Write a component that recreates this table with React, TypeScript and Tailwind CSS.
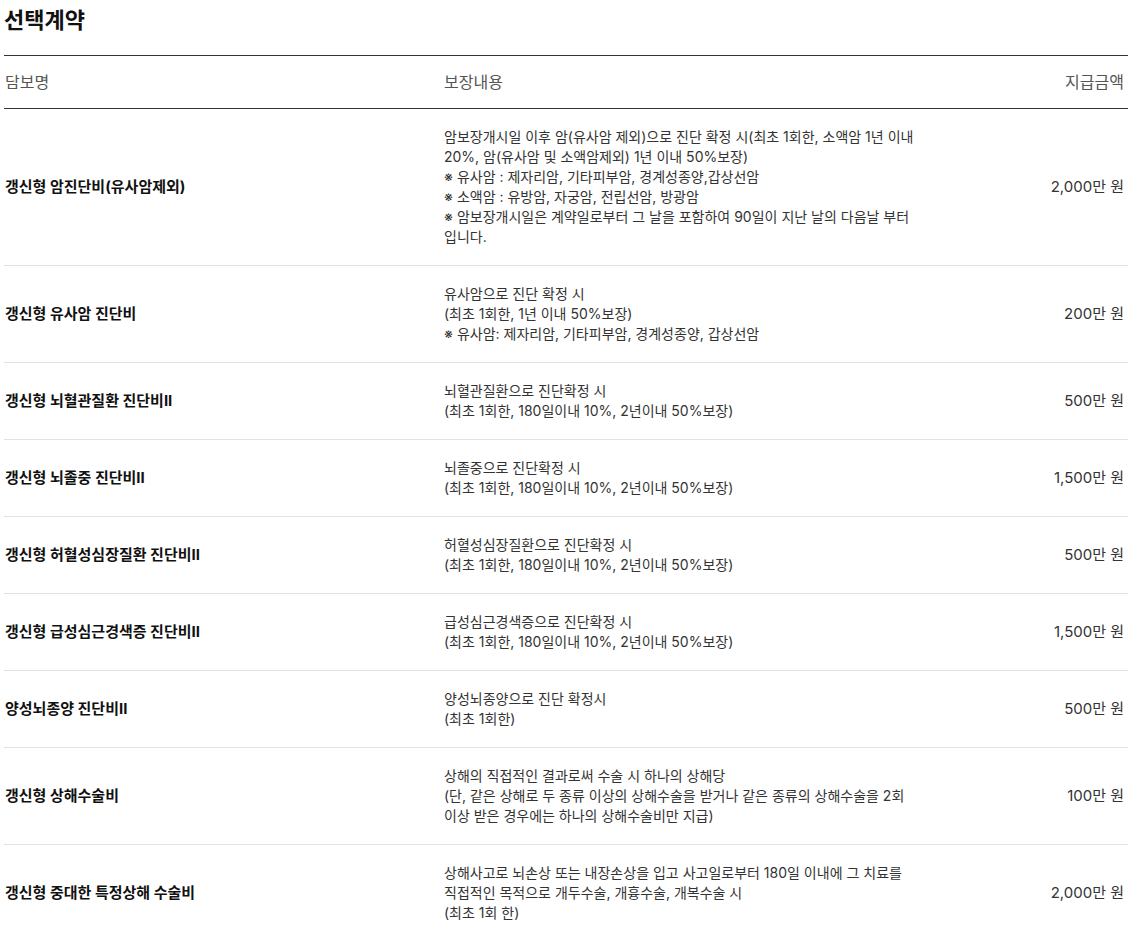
import React from "react";

type Row = {
  name: string;
  desc: string[];
  amount: string;
};

const rows: Row[] = [
  {
    name: "갱신형 암진단비(유사암제외)",
    desc: [
      "암보장개시일 이후 암(유사암 제외)으로 진단 확정 시(최초 1회한, 소액암 1년 이내",
      "20%, 암(유사암 및 소액암제외) 1년 이내 50%보장)",
      "※ 유사암 : 제자리암, 기타피부암, 경계성종양,갑상선암",
      "※ 소액암 : 유방암, 자궁암, 전립선암, 방광암",
      "※ 암보장개시일은 계약일로부터 그 날을 포함하여 90일이 지난 날의 다음날 부터",
      "입니다.",
    ],
    amount: "2,000만 원",
  },
  {
    name: "갱신형 유사암 진단비",
    desc: [
      "유사암으로 진단 확정 시",
      "(최초 1회한, 1년 이내 50%보장)",
      "※ 유사암: 제자리암, 기타피부암, 경계성종양, 갑상선암",
    ],
    amount: "200만 원",
  },
  {
    name: "갱신형 뇌혈관질환 진단비II",
    desc: ["뇌혈관질환으로 진단확정 시", "(최초 1회한, 180일이내 10%, 2년이내 50%보장)"],
    amount: "500만 원",
  },
  {
    name: "갱신형 뇌졸중 진단비II",
    desc: ["뇌졸중으로 진단확정 시", "(최초 1회한, 180일이내 10%, 2년이내 50%보장)"],
    amount: "1,500만 원",
  },
  {
    name: "갱신형 허혈성심장질환 진단비II",
    desc: ["허혈성심장질환으로 진단확정 시", "(최초 1회한, 180일이내 10%, 2년이내 50%보장)"],
    amount: "500만 원",
  },
  {
    name: "갱신형 급성심근경색증 진단비II",
    desc: ["급성심근경색증으로 진단확정 시", "(최초 1회한, 180일이내 10%, 2년이내 50%보장)"],
    amount: "1,500만 원",
  },
  {
    name: "양성뇌종양 진단비II",
    desc: ["양성뇌종양으로 진단 확정시", "(최초 1회한)"],
    amount: "500만 원",
  },
  {
    name: "갱신형 상해수술비",
    desc: [
      "상해의 직접적인 결과로써 수술 시 하나의 상해당",
      "(단, 같은 상해로 두 종류 이상의 상해수술을 받거나 같은 종류의 상해수술을 2회",
      "이상 받은 경우에는 하나의 상해수술비만 지급)",
    ],
    amount: "100만 원",
  },
  {
    name: "갱신형 중대한 특정상해 수술비",
    desc: [
      "상해사고로 뇌손상 또는 내장손상을 입고 사고일로부터 180일 이내에 그 치료를",
      "직접적인 목적으로 개두수술, 개흉수술, 개복수술 시",
      "(최초 1회 한)",
    ],
    amount: "2,000만 원",
  },
];

export default function App() {
  return (
    <div className="bg-white min-h-screen pl-[4px] font-['Inter','Noto_Sans_CJK_KR',sans-serif]">
      <div className="h-[55px] pt-[5px]">
        <h2 className="text-[22px] leading-[30px] font-bold text-[#111]">선택계약</h2>
      </div>

      <div className="grid grid-cols-[440px_1fr] border-t border-b border-[#333] text-[16px] leading-[22px] text-[#555]">
        <div className="py-[15px] pl-[1px]">담보명</div>
        <div className="py-[15px] flex justify-between pr-[4px]">
          <span>보장내용</span>
          <span>지급금액</span>
        </div>
      </div>

      {rows.map((row, i) => (
        <div
          key={i}
          className="grid grid-cols-[440px_1fr_auto] items-center border-b border-[#e2e2e2] last:border-b-0 py-[18px]"
        >
          <div className="pl-[1px] text-[15px] leading-5 font-bold text-[#111]">{row.name}</div>
          <div className="text-[14px] leading-5 text-[#333]">
            {row.desc.map((line, j) => (
              <div key={j} className="whitespace-nowrap">
                {line}
              </div>
            ))}
          </div>
          <div className="pr-[4px] text-[15px] leading-5 text-[#333] text-right whitespace-nowrap">
            {row.amount}
          </div>
        </div>
      ))}
    </div>
  );
}
